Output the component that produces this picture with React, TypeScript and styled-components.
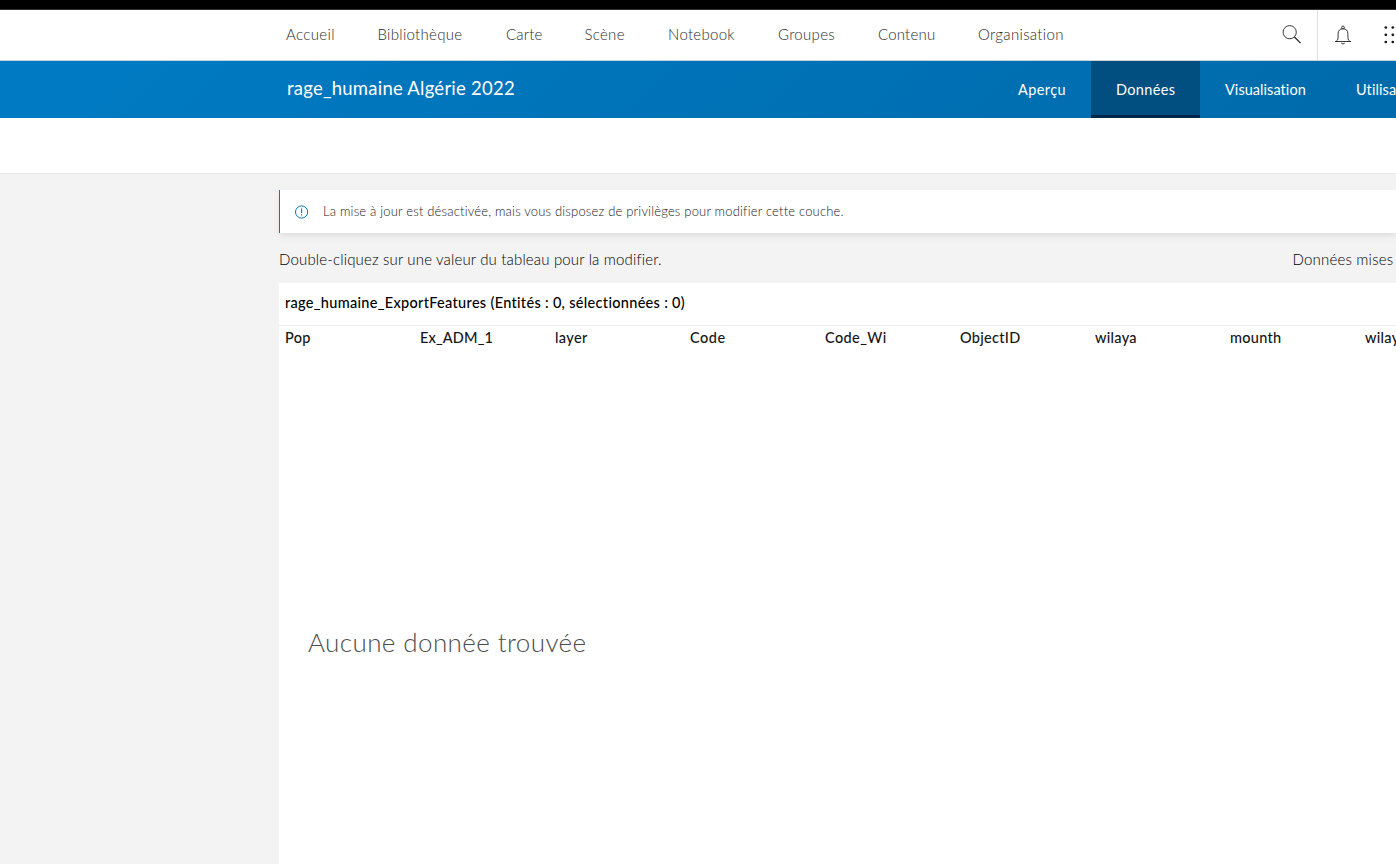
import React from "react";
import styled, { createGlobalStyle } from "styled-components";

const GlobalStyle = createGlobalStyle`
  * { box-sizing: border-box; }
  body {
    margin: 0;
    height: 864px;
    overflow: hidden;
    background: #f3f3f3;
    font-family: Lato, "Open Sans", sans-serif;
    color: #151515;
  }
`;

const Page = styled.div`
  display: flex;
  flex-direction: column;
  width: 100%;
  height: 864px;
  overflow: hidden;
`;

const TopStrip = styled.div`
  flex: none;
  height: 10px;
  background: #000;
  border-bottom: 1px solid #303030;
`;

const GlobalNav = styled.header`
  flex: none;
  display: flex;
  height: 51px;
  padding-left: 286px;
  background: #fff;
  border-bottom: 1px solid #c5d3dd;
`;

const NavLinks = styled.nav`
  display: flex;
  flex: 1;
`;

const NavLink = styled.a<{ $slot: number; $tracking: number }>`
  flex: none;
  width: ${(p) => p.$slot}px;
  font-size: 15px;
  font-weight: 300;
  line-height: 48px;
  letter-spacing: ${(p) => p.$tracking}px;
  white-space: nowrap;
  color: #2c2c2c;
`;

const NavTools = styled.div`
  display: flex;
  flex: none;
  width: 130px;
`;

const ToolButton = styled.div<{ $width: number; $divided?: boolean }>`
  flex: none;
  display: flex;
  align-items: center;
  justify-content: center;
  width: ${(p) => p.$width}px;
  border-left: ${(p) => (p.$divided ? "1px solid #dfdfdf" : "0")};
`;

const ItemHeader = styled.section`
  flex: none;
  display: flex;
  height: 57px;
  padding-left: 287px;
  color: #fff;
  background: linear-gradient(135deg, #007ac2 8%, #006bac 95%);
`;

const ItemTitle = styled.h1`
  flex: 1;
  margin: 0;
  font-size: 18.5px;
  font-weight: 400;
  line-height: 54px;
  letter-spacing: 0.24px;
  white-space: nowrap;
`;

const Tabs = styled.div`
  display: flex;
  flex: none;
  width: 403px;
  overflow: hidden;
`;

const Tab = styled.a<{ $width: number; $active?: boolean; $tracking: number }>`
  flex: none;
  width: ${(p) => p.$width}px;
  padding-left: 25px;
  font-size: 14.5px;
  line-height: 57px;
  letter-spacing: ${(p) => p.$tracking}px;
  white-space: nowrap;
  background: ${(p) => (p.$active ? "#004f80" : "transparent")};
  box-shadow: ${(p) => (p.$active ? "inset 0 -3px #00264a" : "none")};
`;

const SubBar = styled.div`
  flex: none;
  height: 55px;
  background: #fff;
`;

const Content = styled.main`
  flex: 1;
  display: flex;
  flex-direction: column;
  padding-left: 279px;
  padding-top: 16px;
  border-top: 1px solid #ebebeb;
  background: #f3f3f3;
`;

const Notice = styled.div`
  flex: none;
  display: flex;
  align-items: center;
  gap: 14px;
  height: 43px;
  padding-left: 15px;
  background: #fff;
  border-left: 1px solid #007ac2;
  box-shadow: 0 4px 8px -1px rgba(0, 0, 0, 0.08), 0 2px 4px -1px rgba(0, 0, 0, 0.04);
`;

const NoticeText = styled.span`
  padding-bottom: 2px;
  font-size: 13px;
  font-weight: 300;
  letter-spacing: 0.18px;
  white-space: nowrap;
  color: #202020;
`;

const HintRow = styled.div`
  flex: none;
  display: flex;
  justify-content: space-between;
  height: 50px;
  line-height: 52px;
  font-size: 15px;
  font-weight: 300;
  white-space: nowrap;
  color: #000;
`;

const Hint = styled.span`
  letter-spacing: 0.16px;
`;

const Updated = styled.span`
  flex: none;
  width: 103.5px;
  letter-spacing: 0.2px;
  overflow: hidden;
`;

const TablePanel = styled.section`
  flex: 1;
  display: flex;
  flex-direction: column;
  overflow: hidden;
  background: #fff;
`;

const TableTitle = styled.div`
  flex: none;
  height: 43px;
  padding-left: 6px;
  font-size: 14.5px;
  font-weight: 500;
  line-height: 40px;
  letter-spacing: 0.31px;
  white-space: pre;
  color: #000;
  border-bottom: 1px solid #efefef;
`;

const HeaderRow = styled.div`
  flex: none;
  display: flex;
  height: 26px;
  padding-left: 6px;
`;

const HeaderCell = styled.div<{ $tracking: number }>`
  flex: none;
  width: 135px;
  font-size: 14.5px;
  font-weight: 500;
  line-height: 24px;
  letter-spacing: ${(p) => p.$tracking}px;
  white-space: nowrap;
`;

const EmptyMessage = styled.div`
  margin: 271px 0 0 29px;
  font-size: 26px;
  font-weight: 300;
  line-height: 38px;
  letter-spacing: 0.4px;
  color: #4c4c4c;
  white-space: nowrap;
`;

const navItems = [
  { label: "Accueil", slot: 91.5, tracking: 0.35 },
  { label: "Bibliothèque", slot: 128.5, tracking: 0.3 },
  { label: "Carte", slot: 78.5, tracking: 0.2 },
  { label: "Scène", slot: 83.5, tracking: 0.3 },
  { label: "Notebook", slot: 110, tracking: 0.3 },
  { label: "Groupes", slot: 100, tracking: 0.3 },
  { label: "Contenu", slot: 100, tracking: 0.2 },
  { label: "Organisation", slot: 100, tracking: 0.32 },
];

const tabs = [
  { label: "Aperçu", width: 98, tracking: 0.4 },
  { label: "Données", width: 109, tracking: 0.35, active: true },
  { label: "Visualisation", width: 131, tracking: 0.05 },
  { label: "Utilisation", width: 120, tracking: 0.1 },
];

const columns = [
  { name: "Pop", tracking: 0.35 },
  { name: "Ex_ADM_1", tracking: 0.15 },
  { name: "layer", tracking: 0.35 },
  { name: "Code", tracking: 0.55 },
  { name: "Code_Wi", tracking: 0.4 },
  { name: "ObjectID", tracking: 0.3 },
  { name: "wilaya", tracking: 0.3 },
  { name: "mounth", tracking: 0.3 },
  { name: "wilaya_1", tracking: 0.3 },
];

const SearchIcon = () => (
  <svg width="20" height="20" viewBox="0 0 20 20" fill="none" stroke="#222">
    <circle cx="7.7" cy="7.2" r="6.6" strokeWidth="0.9" />
    <path d="M12.4 12 L18.6 18.2" strokeWidth="1.2" />
  </svg>
);

const BellIcon = () => (
  <svg width="18" height="20" viewBox="0 -0.5 18 20" fill="none" stroke="#222" strokeWidth="0.9">
    <circle cx="9" cy="2" r="1.4" />
    <path d="M1 16 H17 M2 16 Q4.1 14.9 4.1 12.3 V8.3 C4.1 5 6 3.2 9 3.2 S13.9 5 13.9 8.3 V12.3 Q13.9 14.9 16 16" />
    <path d="M7.2 17.6 Q9 19.4 10.8 17.6" />
  </svg>
);

const AppsIcon = () => (
  <svg width="18" height="18" viewBox="0 0 18 18" fill="#151515">
    {[1.5, 8.8, 16].map((y) =>
      [1.8, 8.8, 15.8].map((x) => <circle key={`${x}-${y}`} cx={x} cy={y} r="1.35" />)
    )}
  </svg>
);

const InfoIcon = () => (
  <svg width="14" height="14" viewBox="0 0 14 14" fill="none" stroke="#007ac2">
    <circle cx="6.6" cy="7" r="6.1" strokeWidth="1" />
    <path d="M6.6 3.6 V8 M6.6 9.3 V10.6" strokeWidth="1.1" />
  </svg>
);

export default function App() {
  return (
    <>
      <GlobalStyle />
      <Page>
        <TopStrip />
        <GlobalNav>
          <NavLinks>
            {navItems.map((item) => (
              <NavLink key={item.label} $slot={item.slot} $tracking={item.tracking}>
                {item.label}
              </NavLink>
            ))}
          </NavLinks>
          <NavTools>
            <ToolButton $width={51}>
              <SearchIcon />
            </ToolButton>
            <ToolButton $width={51} $divided>
              <BellIcon />
            </ToolButton>
            <ToolButton $width={50}>
              <AppsIcon />
            </ToolButton>
          </NavTools>
        </GlobalNav>
        <ItemHeader>
          <ItemTitle>rage_humaine Algérie 2022</ItemTitle>
          <Tabs>
            {tabs.map((tab) => (
              <Tab key={tab.label} $width={tab.width} $tracking={tab.tracking} $active={tab.active}>
                {tab.label}
              </Tab>
            ))}
          </Tabs>
        </ItemHeader>
        <SubBar />
        <Content>
          <Notice>
            <InfoIcon />
            <NoticeText>
              La mise à jour est désactivée, mais vous disposez de privilèges pour modifier cette couche.
            </NoticeText>
          </Notice>
          <HintRow>
            <Hint>Double-cliquez sur une valeur du tableau pour la modifier.</Hint>
            <Updated>Données mises</Updated>
          </HintRow>
          <TablePanel>
            <TableTitle>rage_humaine_ExportFeatures (Entités : 0, sélectionnées : 0)</TableTitle>
            <HeaderRow>
              {columns.map((column) => (
                <HeaderCell key={column.name} $tracking={column.tracking}>
                  {column.name}
                </HeaderCell>
              ))}
            </HeaderRow>
            <EmptyMessage>Aucune donnée trouvée</EmptyMessage>
          </TablePanel>
        </Content>
      </Page>
    </>
  );
}
